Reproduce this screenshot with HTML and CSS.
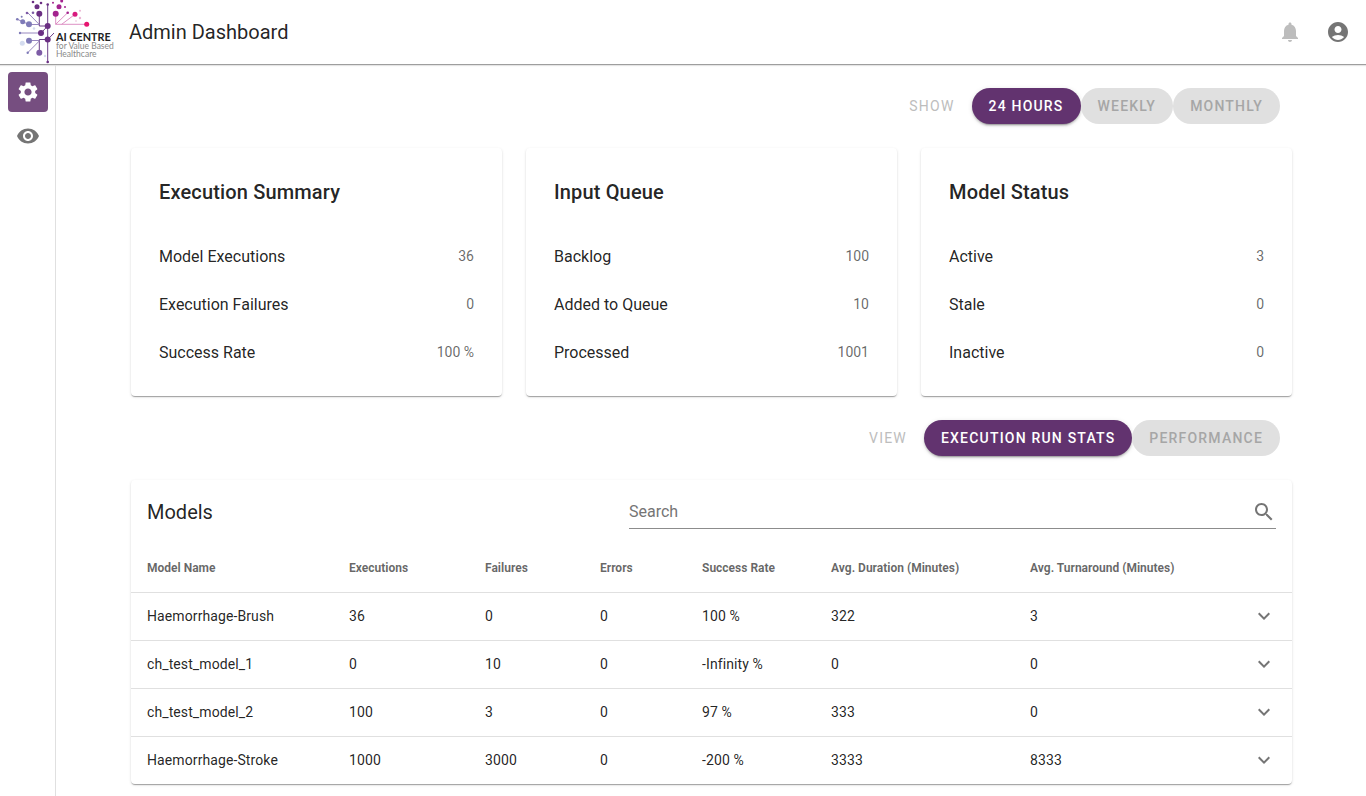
FILE: index.html
```html
<!DOCTYPE html>
<html lang="en">
<head>
  <meta charset="UTF-8" />
  <title>Admin Dashboard</title>
  <link rel="stylesheet" href="styles.css">
</head>
<body>

<header class="topbar">
  <div class="logo">
    <svg class="logo-mark" width="92" height="64" viewBox="0 0 92 64">
      <g fill="none" stroke-width="0.9">
        <path stroke="#5b2a7a" d="M47.700 4V62M47.700 26H39.300V13.700M47.700 39.500H39.300V52.700M47.700 39.500L54 33M41 33L47.700 26" />
        <path stroke="#8d7ab8" d="M39.300 24.500L27.700 12.700M39.300 24.500H29L17.300 19.300M41 33H20M39.300 40.500H29M39.300 41L27.700 52.700" />
        <path stroke="#d985bd" d="M55.700 13.700V24.300H86.700M55.700 24.300L67.700 12.700M61.700 24.300L75 14.300" />
      </g>
      <g fill="#6b2f83">
        <circle cx="37" cy="6.700" r="2.500" /><circle cx="41" cy="3" r="1.300" /><circle cx="33" cy="2" r="1.300" />
        <circle cx="47.700" cy="4.500" r="1.300" /><circle cx="39.300" cy="13.700" r="3" />
        <circle cx="47.700" cy="26" r="3" /><circle cx="41" cy="33" r="3" /><circle cx="47.700" cy="39.500" r="3" />
        <circle cx="47.700" cy="62" r="1.300" />
      </g>
      <g fill="#7d5ca6">
        <circle cx="33" cy="12.700" r="1.300" /><circle cx="39.300" cy="52.700" r="3" /><circle cx="27" cy="13" r="1.300" />
      </g>
      <g fill="#7f7bb8">
        <circle cx="29" cy="24.300" r="3" /><circle cx="29" cy="40.700" r="3" /><circle cx="22.700" cy="21.700" r="2.500" />
        <circle cx="17.300" cy="19.300" r="1.300" /><circle cx="21.700" cy="16.700" r="1" /><circle cx="27.700" cy="52.700" r="1.200" />
        <circle cx="20" cy="33" r="1.200" />
      </g>
      <g fill="#d4dcef">
        <circle cx="22.300" cy="43.300" r="2.500" /><circle cx="45" cy="56" r="1.200" /><circle cx="34" cy="28.500" r="1.200" />
      </g>
      <g fill="#a3238e">
        <circle cx="59" cy="6.700" r="2.500" /><circle cx="55.700" cy="13.700" r="3" /><circle cx="53" cy="2.700" r="1" />
        <circle cx="65" cy="7" r="1" /><circle cx="61.700" cy="1" r="1.500" /><circle cx="67.700" cy="12.700" r="1.300" />
      </g>
      <circle cx="75" cy="14.300" r="2.500" fill="#d81b7f" />
      <circle cx="86.700" cy="24.300" r="2.500" fill="#e6156f" />
      <g fill="#eab5d3">
        <circle cx="80" cy="10.700" r="1" /><circle cx="80" cy="18" r="1.200" /><circle cx="76" cy="21" r="0.800" />
      </g>
    </svg>
    <div class="logo-text">
      <strong>AI CENTRE</strong>
      <span>for Value Based</span>
      <span>Healthcare</span>
    </div>
  </div>
  <div class="app-title">Admin Dashboard</div>
  <div class="topbar-icons">
    <svg class="icon-bell" width="24" height="24" viewBox="0 0 24 24"><path d="M12 22c1.100 0 2-.9 2-2h-4c0 1.100.9 2 2 2zm6-6v-5c0-3.070-1.630-5.640-4.500-6.320V4c0-.83-.67-1.500-1.500-1.500s-1.500.67-1.500 1.500v.68C7.640 5.360 6 7.920 6 11v5l-2 2v1h16v-1l-2-2z"/></svg>
    <svg class="icon-grey" width="24" height="24" viewBox="0 0 24 24"><path d="M12 2C6.480 2 2 6.480 2 12s4.480 10 10 10 10-4.480 10-10S17.520 2 12 2zm0 4c1.930 0 3.500 1.570 3.500 3.500S13.930 13 12 13s-3.500-1.570-3.500-3.500S10.070 6 12 6zm0 14c-2.030 0-4.430-.82-6.140-2.880C7.550 15.800 9.680 15 12 15s4.450.8 6.140 2.120C16.430 19.180 14.030 20 12 20z"/></svg>
  </div>
</header>

<div class="page">
  <nav class="sidenav">
    <a class="nav-item active">
      <svg width="24" height="24" viewBox="0 0 24 24"><path d="M19.140 12.940c.04-.3.060-.61.060-.94 0-.32-.02-.64-.07-.94l2.030-1.580c.18-.14.230-.41.120-.61l-1.920-3.320c-.12-.22-.37-.29-.59-.22l-2.390.96c-.5-.38-1.030-.7-1.620-.94l-.36-2.540c-.04-.24-.24-.41-.48-.41h-3.840c-.24 0-.43.17-.47.41l-.36 2.540c-.59.24-1.130.57-1.620.94l-2.390-.96c-.22-.08-.47 0-.59.22L2.740 8.870c-.12.21-.08.47.12.61l2.030 1.580c-.05.3-.09.63-.09.94s.02.640.07.940l-2.030 1.580c-.18.14-.23.41-.12.610l1.920 3.320c.12.220.37.290.59.220l2.390-.96c.5.380 1.030.700 1.620.940l.36 2.540c.05.240.24.410.48.410h3.840c.24 0 .44-.17.47-.41l.36-2.540c.59-.24 1.130-.56 1.620-.94l2.390.96c.22.080.47 0 .59-.22l1.920-3.320c.12-.22.070-.47-.12-.61l-2.010-1.580zM12 15.600c-1.980 0-3.600-1.620-3.600-3.600s1.620-3.600 3.600-3.600 3.600 1.620 3.600 3.600-1.620 3.600-3.600 3.600z"/></svg>
    </a>
    <a class="nav-item">
      <svg width="24" height="24" viewBox="0 0 24 24"><path d="M12 4.500C7 4.500 2.730 7.610 1 12c1.730 4.390 6 7.500 11 7.500s9.270-3.110 11-7.500c-1.730-4.390-6-7.500-11-7.500zM12 17c-2.760 0-5-2.240-5-5s2.240-5 5-5 5 2.240 5 5-2.240 5-5 5zm0-8c-1.660 0-3 1.340-3 3s1.340 3 3 3 3-1.340 3-3-1.340-3-3-3z"/></svg>
    </a>
  </nav>

  <main class="content">
    <div class="chip-row">
      <span class="chip-label">SHOW</span>
      <button class="chip selected">24 Hours</button>
      <button class="chip">Weekly</button>
      <button class="chip">Monthly</button>
    </div>

    <section class="cards">
      <div class="card">
        <h2>Execution Summary</h2>
        <div class="stat"><span>Model Executions</span><span class="stat-value">36</span></div>
        <div class="stat"><span>Execution Failures</span><span class="stat-value">0</span></div>
        <div class="stat"><span>Success Rate</span><span class="stat-value">100 %</span></div>
      </div>
      <div class="card">
        <h2>Input Queue</h2>
        <div class="stat"><span>Backlog</span><span class="stat-value">100</span></div>
        <div class="stat"><span>Added to Queue</span><span class="stat-value">10</span></div>
        <div class="stat"><span>Processed</span><span class="stat-value">1001</span></div>
      </div>
      <div class="card">
        <h2>Model Status</h2>
        <div class="stat"><span>Active</span><span class="stat-value">3</span></div>
        <div class="stat"><span>Stale</span><span class="stat-value">0</span></div>
        <div class="stat"><span>Inactive</span><span class="stat-value">0</span></div>
      </div>
    </section>

    <div class="chip-row">
      <span class="chip-label">VIEW</span>
      <button class="chip selected">Execution Run Stats</button>
      <button class="chip">Performance</button>
    </div>

    <section class="table-card">
      <div class="table-head">
        <div class="table-title">Models</div>
        <div class="search">
          <span>Search</span>
          <svg width="24" height="24" viewBox="0 0 24 24"><path d="M15.500 14h-.79l-.28-.27C15.410 12.590 16 11.110 16 9.500 16 5.910 13.090 3 9.500 3S3 5.910 3 9.500 5.910 16 9.500 16c1.610 0 3.090-.59 4.230-1.570l.27.28v.79l5 4.990L20.490 19l-4.990-5zm-6 0C7.010 14 5 11.990 5 9.500S7.010 5 9.500 5 14 7.010 14 9.500 11.990 14 9.500 14z"/></svg>
        </div>
      </div>
      <table>
        <thead>
          <tr>
            <th class="col-name">Model Name</th>
            <th class="col-exec">Executions</th>
            <th class="col-fail">Failures</th>
            <th class="col-err">Errors</th>
            <th class="col-rate">Success Rate</th>
            <th class="col-dur">Avg. Duration (Minutes)</th>
            <th class="col-turn">Avg. Turnaround (Minutes)</th>
            <th></th>
          </tr>
        </thead>
        <tbody>
          <tr>
            <td>Haemorrhage-Brush</td><td>36</td><td>0</td><td>0</td><td>100 %</td><td>322</td><td>3</td>
            <td class="expand"><svg width="24" height="24" viewBox="0 0 24 24"><path d="M16.590 8.590L12 13.170 7.410 8.590 6 10l6 6 6-6z"/></svg></td>
          </tr>
          <tr>
            <td>ch_test_model_1</td><td>0</td><td>10</td><td>0</td><td>-Infinity %</td><td>0</td><td>0</td>
            <td class="expand"><svg width="24" height="24" viewBox="0 0 24 24"><path d="M16.590 8.590L12 13.170 7.410 8.590 6 10l6 6 6-6z"/></svg></td>
          </tr>
          <tr>
            <td>ch_test_model_2</td><td>100</td><td>3</td><td>0</td><td>97 %</td><td>333</td><td>0</td>
            <td class="expand"><svg width="24" height="24" viewBox="0 0 24 24"><path d="M16.590 8.590L12 13.170 7.410 8.590 6 10l6 6 6-6z"/></svg></td>
          </tr>
          <tr>
            <td>Haemorrhage-Stroke</td><td>1000</td><td>3000</td><td>0</td><td>-200 %</td><td>3333</td><td>8333</td>
            <td class="expand"><svg width="24" height="24" viewBox="0 0 24 24"><path d="M16.590 8.590L12 13.170 7.410 8.590 6 10l6 6 6-6z"/></svg></td>
          </tr>
        </tbody>
      </table>
    </section>
  </main>
</div>

</body>
</html>
```

FILE: styles.css
```css
* {
  box-sizing: border-box;
  margin: 0;
  padding: 0;
}

html, body {
  height: 100%;
  overflow: hidden;
}

body {
  font-family: Roboto, sans-serif;
  color: rgba(0, 0, 0, 0.87);
  background: #fff;
}

/* Top bar */
.topbar {
  display: flex;
  align-items: center;
  height: 65px;
  border-bottom: 1px solid #9e9e9e;
  box-shadow: 0 1px 1px rgba(0, 0, 0, 0.1);
  padding-right: 16px;
}

.logo {
  display: flex;
  width: 129px;
  height: 64px;
  flex-shrink: 0;
}

.logo-mark {
  flex-shrink: 0;
  margin-right: -36px;
}

.logo-text {
  display: flex;
  flex-direction: column;
  padding-top: 30px;
  font-family: Lato, sans-serif;
  font-size: 8.5px;
  line-height: 7.5px;
  color: #8a8a8a;
  white-space: nowrap;
}

.logo-text strong {
  font-size: 10.8px;
  line-height: 13px;
  font-weight: 700;
  color: #222;
}

.app-title {
  font-size: 20px;
  font-weight: 400;
}

.topbar-icons {
  margin-left: auto;
  display: flex;
  gap: 24px;
}

.icon-bell { fill: #bdbdbd; }
.icon-grey { fill: #757575; }

/* Layout */
.page {
  display: flex;
  height: 731px;
}

.sidenav {
  width: 56px;
  flex-shrink: 0;
  border-right: 1px solid #e0e0e0;
  padding: 7px 8px 0;
  display: flex;
  flex-direction: column;
  gap: 4px;
}

.nav-item {
  width: 40px;
  height: 40px;
  border-radius: 4px;
  display: flex;
  align-items: center;
  justify-content: center;
  fill: #757575;
}

.nav-item.active {
  background: #764e80;
  fill: #fff;
}

.content {
  flex: 1;
  padding: 23px 74px 0 75px;
}

/* Chips */
.chip-row {
  display: flex;
  align-items: center;
  justify-content: flex-end;
  padding-right: 12px;
  height: 36px;
}

.chip-label {
  font-size: 14px;
  letter-spacing: 1.2px;
  color: #bdbdbd;
  margin-right: 17px;
}

.chip {
  height: 36px;
  padding: 0 17px;
  border: none;
  border-radius: 18px;
  background: #e0e0e0;
  color: #a6a6a6;
  font-family: Roboto, sans-serif;
  font-size: 14px;
  font-weight: 500;
  letter-spacing: 1.2px;
  text-transform: uppercase;
}

.chip.selected {
  background: #62336f;
  color: #fff;
  box-shadow: 0 3px 1px -2px rgba(0,0,0,0.2), 0 2px 2px 0 rgba(0,0,0,0.14), 0 1px 5px 0 rgba(0,0,0,0.12);
}

/* Summary cards */
.cards {
  display: grid;
  grid-template-columns: repeat(3, 371px);
  gap: 24px;
  margin-top: 24px;
  margin-bottom: 24px;
}

.card {
  height: 248px;
  border-radius: 4px;
  background: #fff;
  padding: 28px 28px 0;
  box-shadow: 0 2px 1px -1px rgba(0,0,0,0.2), 0 1px 1px 0 rgba(0,0,0,0.14), 0 1px 3px 0 rgba(0,0,0,0.12);
}

.card h2 {
  font-size: 20px;
  line-height: 32px;
  font-weight: 500;
  letter-spacing: 0.15px;
  margin-bottom: 24px;
}

.stat {
  display: flex;
  align-items: center;
  justify-content: space-between;
  height: 48px;
  font-size: 16px;
}

.stat-value {
  font-size: 14px;
  color: rgba(0, 0, 0, 0.6);
}

/* Models table */
.table-card {
  margin-top: 24px;
  border-radius: 4px;
  background: #fff;
  box-shadow: 0 2px 1px -1px rgba(0,0,0,0.2), 0 1px 1px 0 rgba(0,0,0,0.14), 0 1px 3px 0 rgba(0,0,0,0.12);
}

.table-head {
  display: flex;
  align-items: center;
  height: 64px;
  padding: 0 16px;
}

.table-title {
  font-size: 20px;
  flex: 1;
}

.search {
  width: 647px;
  height: 33px;
  margin-top: 1px;
  display: flex;
  align-items: center;
  justify-content: space-between;
  border-bottom: 1px solid #8c8c8c;
  font-size: 16px;
  color: #757575;
  fill: #757575;
}

.search span {
  margin-bottom: 2px;
}

table {
  width: 100%;
  border-collapse: collapse;
  table-layout: fixed;
}

th {
  height: 48px;
  text-align: left;
  padding: 0 0 0 16px;
  font-size: 12px;
  font-weight: 700;
  color: rgba(0, 0, 0, 0.6);
  border-bottom: 1px solid #e0e0e0;
}

td {
  height: 48px;
  padding: 0 0 0 16px;
  font-size: 14px;
  letter-spacing: 0.1px;
  border-bottom: 1px solid #e0e0e0;
}

tbody tr:last-child td {
  border-bottom: none;
}

.col-name { width: 202px; }
.col-exec { width: 136px; }
.col-fail { width: 115px; }
.col-err { width: 102px; }
.col-rate { width: 129px; }
.col-dur { width: 199px; }
.col-turn { width: 200px; }

.expand {
  padding-right: 16px;
}

.expand svg {
  display: block;
  margin-left: auto;
  fill: #757575;
}
```
